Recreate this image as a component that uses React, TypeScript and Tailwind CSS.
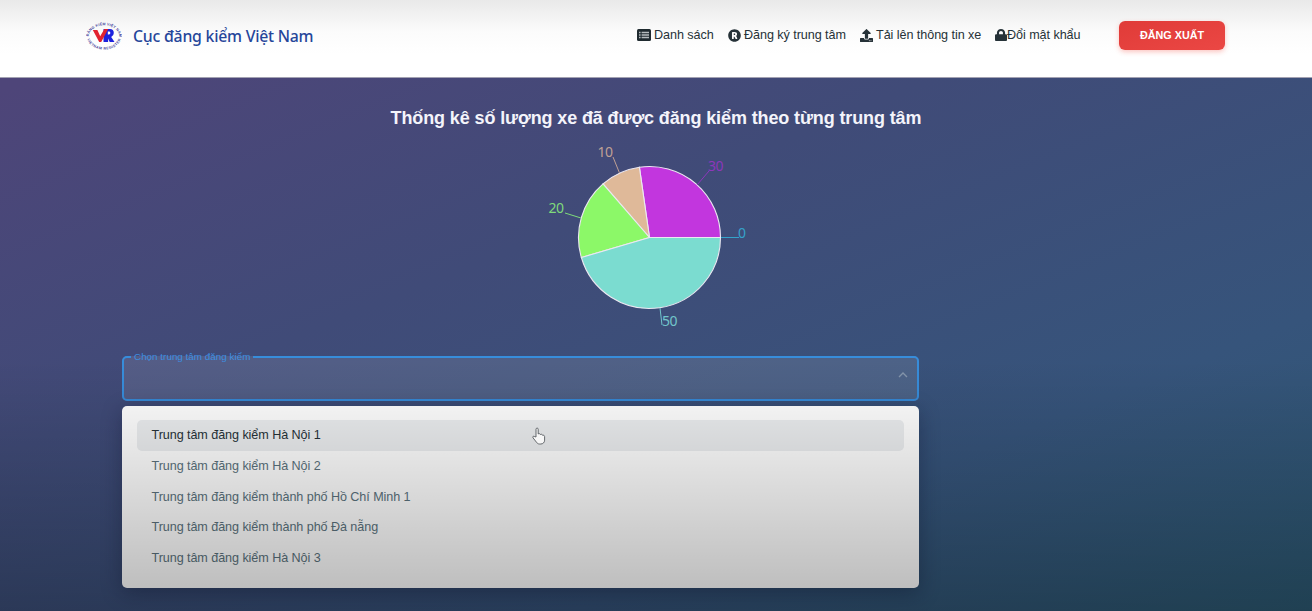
import React from "react";
import { FaUpload, FaLock, FaRegistered } from "react-icons/fa";

const centers = [
  "Trung tâm đăng kiểm Hà Nội 1",
  "Trung tâm đăng kiểm Hà Nội 2",
  "Trung tâm đăng kiểm thành phố Hồ Chí Minh 1",
  "Trung tâm đăng kiểm thành phố Đà nẵng",
  "Trung tâm đăng kiểm Hà Nội 3",
];

const CX = 109.5;
const CY = 99.5;
const R = 71;
const slices = [
  { value: 30, color: "#c236de", label: "#8d37bb", line: [[157, 47], [169, 33]], tx: 168, ty: 32.5 },
  { value: 10, color: "#dfb999", label: "#c0a195", line: [[79.5, 35], [73, 19]], tx: 57.5, ty: 18.5 },
  { value: 20, color: "#8cf868", label: "#7fdb7b", line: [[41, 80], [25, 75]], tx: 8.5, ty: 75 },
  { value: 50, color: "#7bdcd0", label: "#72c6cb", line: [[120, 170], [122, 187]], tx: 122, ty: 188 },
  { value: 0, color: "#32a6cf", label: "#35a3ca", line: [[181, 99.5], [199, 99.5]], tx: 198, ty: 99.5 },
];

function wedge(from: number, to: number) {
  const point = (a: number) => `${CX + R * Math.cos(a)} ${CY - R * Math.sin(a)}`;
  return `M${CX} ${CY} L${point(from)} A${R} ${R} 0 ${to - from > Math.PI ? 1 : 0} 0 ${point(to)} Z`;
}

function PieChart() {
  const total = slices.reduce((sum, s) => sum + s.value, 0);
  let angle = 0;
  return (
    <svg width="220" height="200" viewBox="0 0 220 200" className="mx-auto block">
      {slices.map((s) => {
        const from = angle;
        angle += (s.value / total) * Math.PI * 2;
        return (
          <g key={s.value}>
            {s.value > 0 && <path d={wedge(from, angle)} fill={s.color} stroke="#ece8f2" strokeWidth="1.1" />}
            <path d={`M${s.line[0].join(" ")}L${s.line[1].join(" ")}`} stroke={s.label} strokeWidth="1" />
            <text x={s.tx} y={s.ty} fill={s.label} className="font-['Noto_Sans',sans-serif] text-[14px] tracking-[-0.4px]">
              {s.value}
            </text>
          </g>
        );
      })}
    </svg>
  );
}

function Logo() {
  return (
    <svg width="36" height="30" viewBox="0 0 36 30" className="block">
      <defs>
        <path id="ring-top" d="M2.6 16.5A15.4 12.3 0 1 1 33.4 16.5" />
        <path id="ring-bottom" d="M.8 15A17.2 13.7 0 0 0 35.2 15" />
      </defs>
      <g fill="#46449c" fontFamily="Liberation Sans, sans-serif" fontWeight="700" fontSize="3.6">
        <text textLength="42" dx="1"><textPath href="#ring-top">ĐĂNG KIỂM VIỆT NAM</textPath></text>
        <text textLength="42" dx="3"><textPath href="#ring-bottom">VIETNAM REGISTER</textPath></text>
      </g>
      <path d="M17.5 8h6.3q4 0 4 4 0 3-2.6 3.9L28.5 21h-4.8l-1.6-3.5V21h-4.6z" fill="#1d21dd" />
      <path d="M21.8 10.6h1.2q1.3 0 1.3 1.4t-1.3 1.4h-1.2z" fill="#fff" />
      <path d="M6.8 9h4.6l2.8 6.2L18.4 8h3.8L15.2 21h-2z" fill="#e22330" />
    </svg>
  );
}

function ListIcon() {
  return (
    <svg width="14" height="12" viewBox="0 0 14 12" className="block">
      <rect width="14" height="12" rx="1.5" fill="#1f2a2f" />
      <path d="M2 3.5h1.6M2 6h1.6M2 8.5h1.6M4.6 3.5H12M4.6 6H12M4.6 8.5H12" stroke="#b6bcbe" strokeWidth="1.3" />
    </svg>
  );
}

export default function App() {
  return (
    <div className="relative flex h-[611px] w-[1312px] flex-col overflow-hidden bg-[linear-gradient(158deg,#4e4579_8%,#404b78_40%,#36547b_74%,#2c5972_100%)] font-['Liberation_Sans',sans-serif]">
      <header className="flex h-[78px] shrink-0 border-b border-[#a3a2b2] bg-linear-to-b from-[#e9e9e9] via-[#fbfbfb] via-40% to-white to-70% pr-[87px] pl-[86px]">
        <div className="mt-[21px] flex h-[30px] items-center">
          <Logo />
          <span className="mt-[2px] ml-[11px] font-['Noto_Sans',sans-serif] text-[15.8px] font-medium tracking-[-0.22px] whitespace-nowrap text-[#26469a]">
            Cục đăng kiểm Việt Nam
          </span>
        </div>
        <nav className="mt-[21px] ml-auto flex h-[29px] items-center text-[12.6px] tracking-[-0.06px] whitespace-nowrap text-[#263238]">
          <a className="flex w-[91px] items-center gap-[3px]"><ListIcon />Danh sách</a>
          <a className="flex w-[132px] items-center gap-[3px]"><FaRegistered size={13} />Đăng ký trung tâm</a>
          <a className="flex w-[135px] items-center gap-[3px]"><FaUpload size={13} />Tải lên thông tin xe</a>
          <a className="flex w-[124px] items-center">
            <FaLock size={12} preserveAspectRatio="none" />
            Đổi mật khẩu
          </a>
        </nav>
        <button className="mt-[21px] h-[29px] w-[106px] rounded-[6px] bg-linear-to-br from-[#e03b38] to-[#eb4744] text-[10.8px] font-bold text-white shadow-[0_2px_5px_rgba(244,67,54,0.3)]">
          ĐĂNG XUẤT
        </button>
      </header>

      <main className="flex flex-1 flex-col">
        <h1 className="mt-[28px] h-[24px] text-center text-[18px] leading-[24px] font-bold tracking-[-0.12px] whitespace-nowrap text-[#f4f4fb]">
          Thống kê số lượng xe đã được đăng kiểm theo từng trung tâm
        </h1>
        <div className="mt-[8px] pr-[12px]">
          <PieChart />
        </div>

        <section className="mt-[15px] ml-[122px] w-[797px]">
          <fieldset className="h-[48px] min-w-0 rounded-[5px] border-2 border-[#378ddb] bg-white/10 pl-[7px]">
            <legend className="h-[7px] px-[3px] text-[9.9px] leading-[8px] whitespace-nowrap text-[#3d8fe0]">
              Chọn trung tâm đăng kiểm
            </legend>
            <svg width="10" height="6" viewBox="0 0 10 6" fill="none" className="mt-[12px] mr-[9px] ml-auto block">
              <path d="M1 5l4-4 4 4" stroke="#8495ab" strokeWidth="1.4" />
            </svg>
          </fieldset>
          <ul className="mt-[5px] h-[182px] rounded-[5px] bg-white px-[15px] pt-[14px] shadow-[0_5px_20px_rgba(15,20,50,0.35)]">
            {centers.map((name, i) => (
              <li
                key={name}
                className={
                  i === 0
                    ? "flex h-[30.6px] items-center rounded-[5px] bg-[#eceef0] pt-[1px] pl-[14.5px] text-[12.6px] tracking-[-0.07px] text-[#263238]"
                    : "flex h-[30.6px] items-center pt-[1px] pl-[14.5px] text-[12.6px] tracking-[-0.07px] text-[#5b727d]"
                }
              >
                {name}
              </li>
            ))}
          </ul>
        </section>
      </main>

      <div className="pointer-events-none absolute inset-x-0 bottom-0 h-[251px] bg-linear-to-b from-black/0 to-black/28" />
      <svg width="14" height="18" viewBox="0 0 14 18" className="absolute top-[427px] left-[532px]">
        <path
          d="M4 10V2.3C4 .6 6.2.6 6.2 2.3V7c.7-.7 2-.4 2.2.5.8-.5 2-.2 2.2.8 1-.4 2 .2 2 1.3v3.6c0 2.2-1.6 3.8-3.8 3.8H7.5c-1.3 0-2.2-.6-2.9-1.6L1 10.8c-.8-1.3.8-2.2 1.7-1.2z"
          fill="#f6f6f6"
          stroke="#55595d"
          strokeWidth=".9"
        />
      </svg>
    </div>
  );
}
